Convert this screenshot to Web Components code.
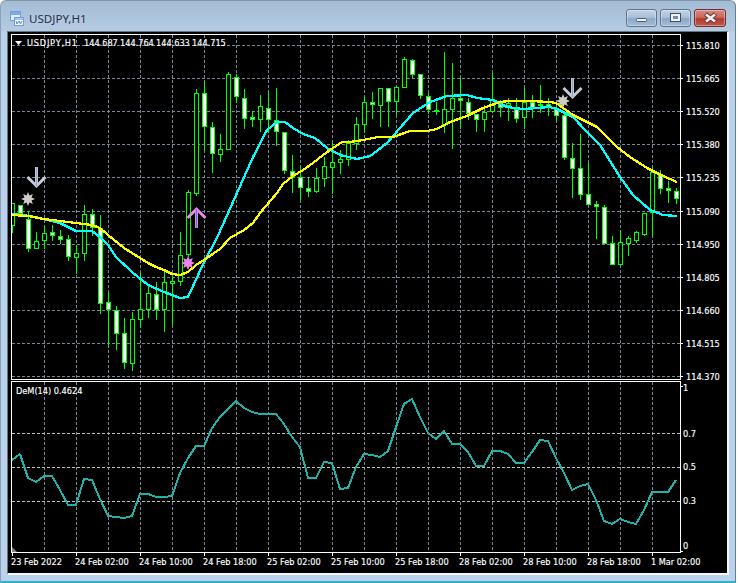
<!DOCTYPE html>
<html>
<head>
<meta charset="utf-8">
<style>
    html, body { margin: 0; background: #fff; height: 100%; overflow: hidden; }
</style>
</head>
<body>
<mt-window caption="USDJPY,H1">
    <mt-chart></mt-chart>
</mt-window>
<script>
// ----------------------------------------------------------------------------
// MARK: Data (page pixel coordinates)
// ----------------------------------------------------------------------------

// [body top, body bottom, wick top, wick bottom, filled]
const CANDLES = [
    [203,225,203,232,0],[205,213,205,213,1],[219,248,211,251,1],[241,248,232,248,0],[233,240,226,248,0],[232,235,225,240,1],
    [236,239,230,243,1],[239,256,235,260,1],[253,257,245,273,0],[214,253,205,260,0],[214,227,209,235,1],[228,303,215,313,1],
    [302,309,292,345,1],[310,333,306,349,1],[333,362,318,368,1],[319,363,312,370,0],[309,319,273,327,0],[293,309,286,317,0],
    [294,309,282,319,1],[282,309,272,331,0],[281,283,277,324,0],[255,281,232,285,0],[192,254,190,256,0],[93,193,89,195,0],
    [93,126,82,150,1],[127,153,122,172,1],[149,154,134,161,0],[74,149,72,149,0],[77,96,74,102,1],[98,118,89,128,1],
    [117,119,111,126,1],[106,119,95,131,0],[108,119,91,132,1],[120,131,88,145,1],[132,170,132,173,1],[171,177,155,192,1],
    [177,187,167,199,1],[188,191,177,196,1],[178,191,168,192,0],[166,178,157,186,0],[162,167,143,193,0],[159,162,150,173,0],
    [143,159,140,165,0],[124,143,117,149,0],[102,124,96,132,0],[102,104,92,118,1],[88,105,88,126,0],[88,101,88,126,1],
    [87,101,87,114,0],[59,87,57,87,0],[60,74,59,77,1],[74,95,74,98,1],[96,109,93,113,1],[110,111,102,114,1],
    [109,124,52,132,0],[98,109,63,148,0],[98,100,78,128,1],[102,113,98,119,1],[114,119,114,131,1],[112,119,105,131,0],
    [99,111,73,112,0],[101,107,100,116,1],[103,105,98,120,0],[109,118,98,122,1],[102,117,88,128,0],[102,107,95,117,1],
    [104,105,85,112,0],[104,107,98,115,1],[109,115,104,120,1],[115,157,112,159,1],[158,168,143,197,1],[168,194,134,199,1],
    [194,204,163,204,1],[204,206,201,238,1],[207,243,205,243,1],[243,264,236,264,1],[242,264,230,264,0],[238,243,236,255,0],
    [232,240,231,242,0],[213,234,213,235,0],[172,212,167,235,0],[175,188,170,193,1],[188,190,181,202,1],[191,198,188,203,1]
]

const YELLOW = [[12,215],[28,216],[44,219],[60,221],[76,223],[92,225],[100,228],[108,235],[124,248],[140,258],[148,263],[156,267],[164,270],[172,274],[180,275],[188,272],[196,265],[204,260],[220,249],[230,238],[244,230],[253,223],[260,213],[277,193],[283,184],[293,176],[303,170],[313,163],[323,155],[333,148],[342,142],[350,142],[363,140],[378,137],[393,137],[410,131],[427,131],[437,129],[450,122],[467,116],[483,108],[500,102],[510,101],[530,101],[550,102],[556,103],[573,115],[587,122],[597,127],[617,147],[630,157],[647,168],[663,176],[677,182]]

const CYAN = [[12,214],[30,216],[44,219],[52,221],[60,223],[68,227],[76,231],[92,231],[100,237],[108,245],[116,257],[132,272],[148,285],[164,292],[172,295],[180,298],[188,297],[204,262],[216,240],[237,193],[253,157],[267,130],[277,122],[285,122],[293,128],[303,134],[315,138],[327,148],[340,155],[357,159],[370,156],[373,154],[387,143],[400,128],[413,113],[430,102],[447,96],[467,95],[477,98],[493,100],[507,107],[523,109],[550,107],[557,109],[573,117],[587,132],[600,145],[620,177],[633,195],[650,210],[663,215],[677,216]]

// one value per bar, x = 12 + 8i
const DEM = [460,454,478,482,476,476,490,505,505,479,480,499,516,517,518,516,494,494,497,497,496,473,458,446,446,428,417,409,401,408,412,414,414,414,424,437,447,478,478,462,463,489,488,467,454,455,457,451,427,404,399,417,433,439,431,444,444,452,466,466,451,451,454,463,463,452,440,441,458,473,490,486,484,500,521,524,519,522,524,510,492,492,492,480]

const PRICES = ['115.810','115.665','115.520','115.380','115.235','115.090','114.950','114.805','114.660','114.515','114.370']
const TIMES = ['23 Feb 2022','24 Feb 02:00','24 Feb 10:00','24 Feb 18:00','25 Feb 02:00','25 Feb 10:00','25 Feb 18:00','28 Feb 02:00','28 Feb 10:00','28 Feb 18:00','1 Mar 02:00']
const DEM_LEVELS = [['1',388],['0.7',434],['0.5',467],['0.3',501],['0',546]]
const LEGEND = [['144.687',84],['144.764',120],['144.633',156],['144.715',192]]

// ----------------------------------------------------------------------------
// MARK: Helpers
// ----------------------------------------------------------------------------

const points = (list) => list.map((p) => p.join(',')).join(' ')
const priceY = (i) => Math.round(45 + i * 33.1)

/**
 * @param {number} cx
 * @param {number} cy
 * @param {number} outer
 * @param {number} inner
 * @returns string
 */
const starPoints = (cx, cy, outer, inner) => {
    const out = []
    for (let i = 0; i < 16; i++) {
        const r = i % 2 ? inner : outer
        const a = (Math.PI * i) / 8 - Math.PI / 2
        out.push(`${(cx + r * Math.cos(a)).toFixed(1)},${(cy + r * Math.sin(a)).toFixed(1)}`)
    }
    return out.join(' ')
}

// ----------------------------------------------------------------------------
// MARK: Window
// ----------------------------------------------------------------------------

const windowTemplate = document.createElement('template')
windowTemplate.innerHTML = `
    <style>
        :host {
            display: flex;
            flex-direction: column;
            box-sizing: border-box;
            width: 736px;
            height: 583px;
            padding: 0 6px 6px 6px;
            border-bottom: 2px solid #2ab4c8;
            border-top: 1px solid #7f93a6;
            border-right: 1px solid #5f7f92;
            border-left: 1px solid #8aa2b6;
            border-radius: 6px 6px 0 0;
            background: linear-gradient(#a3bcd4 0, #b4cbe2 30px, #bad2ec 31px, #bad2ec 100%);
            font-family: "Noto Sans", sans-serif;
        }
        .bar {
            display: flex;
            align-items: center;
            box-sizing: border-box;
            height: 30px;
            padding-top: 4px;
            flex: none;
        }
        .icon {
            width: 14px;
            height: 15px;
            margin: 0 5px 0 3px;
            flex: none;
        }
        .caption {
            flex: 1;
            font-size: 11.6px;
            color: #1f2f48;
            text-shadow: 0 0 6px rgba(255, 255, 255, 0.45);
        }
        .buttons {
            display: flex;
            gap: 3px;
            margin-right: 3px;
        }
        .body {
            flex: 1;
            min-height: 0;
            display: flex;
            border-top: 1px solid #647484;
            border-left: 1px solid #647484;
            border-right: 2px solid #f4f8fc;
            border-bottom: 2px solid #f4f8fc;
        }
    </style>
    <div class="bar">
        <svg class="icon" viewBox="0 0 14 15">
            <rect x="0.5" y="0.5" width="10" height="9" fill="#e4eefb" stroke="#6f9fe0"/>
            <rect x="1" y="1" width="9" height="3" fill="#7fa9e6"/>
            <rect x="4.5" y="6.5" width="9" height="8" fill="#f5f9ff" stroke="#6f9fe0"/>
            <rect x="5" y="7" width="8" height="2" fill="#a8c6ef"/>
            <path d="M6 10l1 3 2-3 1.5 3 1.5-3" fill="none" stroke="#4f86d0"/>
        </svg>
        <div class="caption"></div>
        <div class="buttons">
            <mt-title-button kind="min"></mt-title-button>
            <mt-title-button kind="max"></mt-title-button>
            <mt-title-button kind="close"></mt-title-button>
        </div>
    </div>
    <div class="body"><slot></slot></div>
`

class MtWindow extends HTMLElement {
    constructor() {
        super()
        this.attachShadow({ mode: 'open' })
        this.shadowRoot.appendChild(windowTemplate.content.cloneNode(true))
    }

    connectedCallback() {
        this.shadowRoot.querySelector('.caption').textContent = this.getAttribute('caption')
    }
}

// ----------------------------------------------------------------------------
// MARK: Title button
// ----------------------------------------------------------------------------

const GLYPHS = {
    min: '<rect x="9.5" y="7.5" width="10" height="3" rx="1" fill="#eef2f6" stroke="#4a5a70"/>',
    max: '<rect x="9.5" y="2.5" width="10" height="8" fill="#eef2f6" stroke="#3e4e64"/><rect x="12" y="5" width="5" height="3" fill="#7a8ca2"/>',
    close: '<path d="M9.5 3l10 8M19.5 3l-10 8" stroke="#5a3a3a" stroke-width="4.5"/><path d="M10 3.5l9 7M19 3.5l-9 7" stroke="#f4f0f0" stroke-width="2.6"/>',
}

class MtTitleButton extends HTMLElement {
    constructor() {
        super()
        this.attachShadow({ mode: 'open' })
    }

    connectedCallback() {
        const kind = this.getAttribute('kind')
        const bg = kind === 'close'
            ? 'linear-gradient(#d98a80 0, #c8685e 45%, #b23a30 55%, #c25a4a 100%)'
            : 'linear-gradient(#c2d4e6 0, #a9c0d8 45%, #8ba8c6 55%, #a4bdd6 100%)'
        this.shadowRoot.innerHTML = `
            <style>
                :host {
                    display: flex;
                    align-items: center;
                    justify-content: center;
                    box-sizing: border-box;
                    width: ${kind === 'close' ? 32 : 31}px;
                    height: 18px;
                    border: 1px solid ${kind === 'close' ? '#6e3038' : '#5e748c'};
                    border-radius: 3px;
                    box-shadow: inset 0 0 0 1px rgba(255, 255, 255, 0.35);
                    background: ${bg};
                }
                svg { display: block; }
            </style>
            <svg width="29" height="14" viewBox="0 0 29 14">${GLYPHS[kind]}</svg>
        `
    }
}

// ----------------------------------------------------------------------------
// MARK: Chart
// ----------------------------------------------------------------------------

class MtChart extends HTMLElement {
    constructor() {
        super()
        this.attachShadow({ mode: 'open' })
    }

    connectedCallback() {
        this.shadowRoot.innerHTML = `
            <style>
                :host {
                    display: block;
                    flex: 1;
                    background: #000;
                    font-family: "DejaVu Sans Condensed", "DejaVu Sans", sans-serif;
                    font-stretch: condensed;
                }
                svg { display: block; }
                text { fill: #fff; stroke: #fff; stroke-width: 0.15px; font-size: 9.1px; }
                .grid { stroke: #778899; stroke-dasharray: 3 2; fill: none; shape-rendering: crispEdges; }
                .level { stroke: #c0c0c0; stroke-dasharray: 3 2; fill: none; shape-rendering: crispEdges; }
                .edge { stroke: #fff; fill: none; shape-rendering: crispEdges; }
                .line { fill: none; stroke-width: 2; stroke-linejoin: bevel; shape-rendering: crispEdges; }
                .ma { stroke-width: 2.3; }
                .candle { shape-rendering: crispEdges; stroke: #0f0; }
            </style>
            <svg width="719" height="542" viewBox="8 32 719 542">
                ${this.#grid()}
                <svg x="12" y="35" width="668" height="344" viewBox="12 35 668 344">
                    ${this.#candles()}
                    <polyline class="line ma" stroke="#00ffff" points="${points(CYAN)}"/>
                    <polyline class="line ma" stroke="#ffff00" points="${points(YELLOW)}"/>
                    ${this.#markers()}
                </svg>
                <svg x="12" y="382" width="668" height="170" viewBox="12 382 668 170">
                    <polygon points="12,547 17,552 12,552" fill="#808890"/>
                    <polyline class="line" stroke="#20b2aa" points="${points(DEM.map((y, i) => [12 + 8 * i, y]))}"/>
                </svg>
                ${this.#frame()}
                ${this.#labels()}
            </svg>
        `
    }

    #grid() {
        let out = ''
        for (let x = 44.5; x < 680; x += 32) {
            out += `<path class="grid" d="M${x} 35V379M${x} 382V552"/>`
        }
        PRICES.forEach((_, i) => {
            out += `<path class="grid" d="M12 ${priceY(i) + 0.5}H680"/>`
        })
        for (const y of [433.5, 467.5, 501.5]) {
            out += `<path class="level" d="M12 ${y}H680"/>`
        }
        return out
    }

    #candles() {
        let out = ''
        CANDLES.forEach(([top, bottom, high, low, filled], i) => {
            const x = 12 + 8 * i
            out += `<path class="candle" d="M${x + 0.5} ${high}V${low + 1}"/>`
            out += `<rect class="candle" x="${x - 1.5}" y="${top + 0.5}" width="4" height="${bottom - top}" fill="${filled ? '#fff' : '#000'}"/>`
        })
        return out
    }

    #markers() {
        const arrow = (x, tip, tail, dir, stroke, core) => `
            <path d="M${x} ${tail}V${tip}M${x - 9} ${tip - dir * 9}L${x} ${tip}L${x + 9} ${tip - dir * 9}" fill="none" stroke="${stroke}" stroke-width="3"/>
            <path d="M${x} ${tail}V${tip}" fill="none" stroke="${core}" stroke-width="1.2"/>
        `
        return `
            ${arrow(36.5, 186, 167, 1, '#c6cdd9', '#8ea6cc')}
            ${arrow(572.5, 97, 78, 1, '#c6cdd9', '#8ea6cc')}
            ${arrow(196.5, 209, 228, -1, '#e88ae8', '#6a6ae0')}
            <polygon points="${starPoints(28, 199, 7, 3.8)}" fill="#cfcbc6"/>
            <polygon points="${starPoints(563, 101, 7, 3.8)}" fill="#cfcbc6"/>
            <polygon points="${starPoints(188, 263, 7, 3.8)}" fill="#ee82ee"/>
        `
    }

    #frame() {
        let out = `
            <path class="edge" d="M11.5 380V34.5H680.5V380M11.5 379.5H680.5"/>
            <path class="edge" d="M11.5 381.5H680.5V552.5H11.5Z"/>
            <path class="edge" d="M680 386.5H683M680 551.5H683"/>
        `
        PRICES.forEach((_, i) => {
            out += `<path class="edge" d="M680 ${priceY(i) + 0.5}H683"/>`
        })
        TIMES.forEach((_, i) => {
            out += `<path class="edge" d="M${12.5 + 64 * i} 552V556"/>`
        })
        return out
    }

    #labels() {
        let out = `
            <polygon points="15,41 22,41 18.5,45" fill="#fff"/>
            <text x="27" y="46" textLength="50" lengthAdjust="spacing">USDJPY,H1</text>
            <text x="16" y="394">DeM(14) 0.4624</text>
        `
        for (const [label, x] of LEGEND) {
            out += `<text x="${x}" y="46">${label}</text>`
        }
        PRICES.forEach((label, i) => {
            out += `<text x="686" y="${priceY(i) + 4}">${label}</text>`
        })
        for (const [label, y] of DEM_LEVELS) {
            out += `<text x="683" y="${y + 3}">${label}</text>`
        }
        TIMES.forEach((label, i) => {
            out += `<text x="${11 + 64 * i}" y="565">${label}</text>`
        })
        return out
    }
}

customElements.define('mt-title-button', MtTitleButton)
customElements.define('mt-window', MtWindow)
customElements.define('mt-chart', MtChart)
</script>
</body>
</html>
